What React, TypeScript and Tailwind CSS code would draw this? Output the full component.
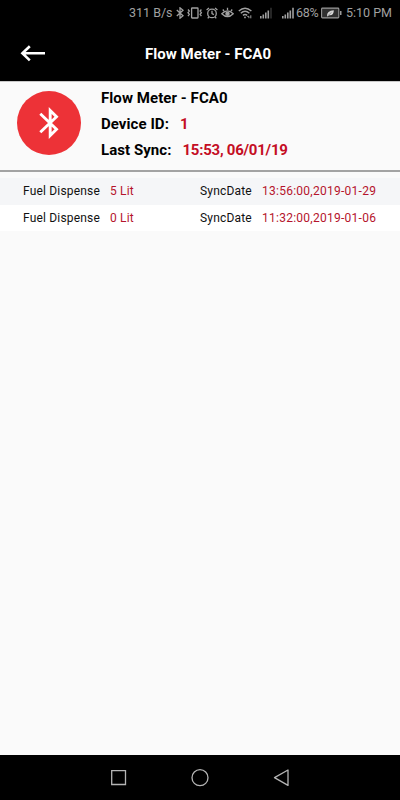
import React from 'react';

type IconProps = { className?: string };

const Bluetooth = ({ className }: IconProps) => (
  <svg className={className} viewBox="0 0 8 12" fill="none" stroke="currentColor" strokeWidth="1.3">
    <path d="M.8 3 7 8.8 4 11.2V.8L7 3.2.8 9" />
  </svg>
);

const Vibrate = ({ className }: IconProps) => (
  <svg className={className} viewBox="0 0 16 12" fill="none" stroke="currentColor" strokeWidth="1.3">
    <rect x="4.6" y="1" width="6.4" height="10" rx=".5" />
    <path d="M1 2.5 2.3 4 1 5.7l1.3 1.6L1 9.2M14.4 2.5 13.1 4l1.3 1.7-1.3 1.6 1.3 1.9" />
  </svg>
);

const Alarm = ({ className }: IconProps) => (
  <svg className={className} viewBox="0 0 12 12" fill="none" stroke="currentColor" strokeWidth="1.3">
    <circle cx="6" cy="6.4" r="4.3" />
    <path d="M6 3.8v2.8l1.9 1M.6 3 3 .9M11.4 3 9 .9M2.8 10l-1 1.3M9.2 10l1 1.3" />
  </svg>
);

const Eye = ({ className }: IconProps) => (
  <svg className={className} viewBox="0 0 13 12" fill="none" stroke="currentColor" strokeWidth="1.3">
    <path d="M.8 6.8Q6.5.8 12.2 6.8 6.5 12.6.8 6.8ZM6.5 3V.8M3 4 1.8 2.5M10 4l1.2-1.5" />
    <circle cx="6.5" cy="6.7" r="1.6" fill="currentColor" />
  </svg>
);

const Wifi = ({ className }: IconProps) => (
  <svg className={className} viewBox="0 0 15 12" fill="none" stroke="currentColor" strokeWidth="1.4">
    <path d="M.8 4Q7-1.6 13.4 4M2.8 6.3Q7 2.4 11.4 6.3M4.9 8.4Q7 6.6 9.2 8.4" />
    <circle cx="7" cy="10.4" r=".9" fill="currentColor" stroke="none" />
    <path d="M9.3 9.4h1.6v1.8M12.8 8.3v3" strokeWidth="1" />
  </svg>
);

const Signal = ({ className, full }: IconProps & { full?: boolean }) => (
  <svg className={className} viewBox="0 0 12 12" fill="currentColor">
    <path d="M0 9h1.6v2.5H0zM2.5 7.5h1.6v4H2.5zM5 5.5h1.6v6H5zM7.5 3.5h1.6v8H7.5z" />
    <path d="M10.2.8h1.6v10.7h-1.6z" opacity={full ? 1 : 0.3} />
  </svg>
);

const Battery = ({ className }: IconProps) => (
  <svg className={className} viewBox="0 0 21 12" fill="none">
    <rect x=".6" y="1.1" width="17.2" height="9.8" rx=".8" fill="#303030" stroke="#999" strokeWidth="1.1" />
    <path d="M19 4h1.5v4H19z" fill="#999" />
    <path d="M6 9Q5.7 3.6 12.8 3.2 13 8.6 8.2 8.2L6.6 9.4Z" fill="#d5d5d5" />
    <path d="m6.5 9 4-3.6" stroke="#555" strokeWidth=".5" />
  </svg>
);

const StatusBar = () => (
  <div className="flex h-[26px] shrink-0 items-center bg-black pl-[129px] text-[12.5px] leading-[26px] text-[#a0a0a0]">
    <span className="w-[47px] whitespace-nowrap">311 B/s</span>
    <Bluetooth className="h-3 w-2 shrink-0" />
    <Vibrate className="ml-[3px] h-3 w-4 shrink-0" />
    <Alarm className="ml-[3px] h-3 w-3 shrink-0" />
    <Eye className="ml-[3px] h-3 w-[13px] shrink-0" />
    <Wifi className="ml-[4px] h-3 w-[15px] shrink-0" />
    <Signal className="ml-[7px] h-3 w-3 shrink-0" />
    <Signal className="ml-[10px] h-3 w-3 shrink-0" full />
    <span className="ml-[2px] w-[25px] shrink-0 whitespace-nowrap tracking-[-0.3px]">68%</span>
    <Battery className="h-3 w-[21px] shrink-0" />
    <span className="ml-[4px] whitespace-nowrap">5:10 PM</span>
  </div>
);

const Header = () => (
  <header className="grid h-[55px] shrink-0 grid-cols-[64px_1fr_48px] items-center bg-black text-white">
    <svg className="mb-[2px] ml-5 h-5 w-[26px]" viewBox="0 0 26 20" fill="none" stroke="currentColor" strokeWidth="2.6">
      <path d="M25 10.3H3M9.8 3.2 2.4 10.3l7.4 7.1" />
    </svg>
    <h1 className="text-center text-[15px] leading-[18px] font-bold tracking-[0.04px]">Flow Meter - FCA0</h1>
  </header>
);

const DeviceCard = () => (
  <section className="flex h-[91px] shrink-0 border-t border-b-2 border-t-[#c8c8c8] border-b-[#a3a3a3] bg-[#fafafa] pl-[16.5px]">
    <div className="mt-[9px] flex h-16 w-16 items-center justify-center rounded-full bg-[#ed3237]">
      <svg className="h-8 w-5" viewBox="0 0 20 32" fill="none" stroke="#fff" strokeWidth="2.9">
        <path d="m1.3 6.8 16.2 15.4-6.3 6.3V3.5l6.3 6.3L1.3 25.2" />
      </svg>
    </div>
    <div className="ml-[20.5px] mt-[3px] text-[15px] leading-[26px] font-bold whitespace-nowrap text-black">
      <p className="tracking-[0.07px]">Flow Meter - FCA0</p>
      <p className="tracking-[0.06px]">Device ID:<span className="ml-[11px] text-[#c40d24]">1</span></p>
      <p className="tracking-[0.06px]">Last Sync:<span className="ml-[11px] tracking-[-0.25px] text-[#c40d24]">15:53, 06/01/19</span></p>
    </div>
  </section>
);

const records = [
  { amount: '5 Lit', date: '13:56:00,2019-01-29' },
  { amount: '0 Lit', date: '11:32:00,2019-01-06' },
];

const Records = () => (
  <main className="flex-1 bg-[#fafafa] pt-[6px]">
    {records.map((r) => (
      <div
        key={r.date}
        className="grid h-[26.5px] grid-cols-[87px_90px_62px_1fr] items-center bg-white pl-[23px] text-[12px] leading-[26px] tracking-[0.18px] whitespace-nowrap text-[#111] odd:bg-[#f5f6f8]"
      >
        <span>Fuel Dispense</span>
        <span className="text-[#b5142c]">{r.amount}</span>
        <span>SyncDate</span>
        <span className="tracking-[0.26px] text-[#b5142c]">{r.date}</span>
      </div>
    ))}
  </main>
);

const NavBar = () => (
  <nav className="flex h-[45px] shrink-0 items-center justify-center gap-[63px] bg-black text-[#b4b4b4]">
    <svg className="h-[18px] w-[18px]" viewBox="0 0 18 18" fill="none" stroke="currentColor" strokeWidth="1.3">
      <path d="M1.7 1.7h13.8v13.8H1.7z" />
    </svg>
    <svg className="h-[18px] w-[18px]" viewBox="0 0 18 18" fill="none" stroke="currentColor" strokeWidth="1.3">
      <circle cx="9" cy="8.7" r="8" />
    </svg>
    <svg className="h-[18px] w-[18px]" viewBox="0 0 18 18" fill="none" stroke="currentColor" strokeWidth="1.3" strokeLinejoin="round">
      <path d="M16 1v15.4L2.5 8.6z" />
    </svg>
  </nav>
);

export default function App() {
  return (
    <div className="flex h-[800px] w-[400px] flex-col overflow-hidden font-['Roboto','Liberation_Sans',sans-serif]">
      <StatusBar />
      <Header />
      <DeviceCard />
      <Records />
      <NavBar />
    </div>
  );
}
